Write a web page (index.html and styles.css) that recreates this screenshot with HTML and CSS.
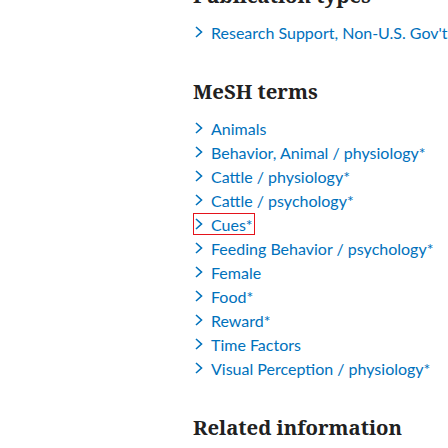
FILE: index.html
```html
<!DOCTYPE html>
<html lang="en">
<head>
<meta charset="utf-8">
<title>MeSH terms</title>
<link rel="stylesheet" href="styles.css">
</head>
<body>
<main class="page">
  <section class="block">
    <h2 class="block-title">Publication types</h2>
    <ul class="terms">
      <li class="term"><a class="term-link" href="#"><svg class="chev" viewBox="0 0 8 12" width="8" height="12"><path d="M1 1 L6.5 6 L1 11"/></svg><span>Research Support, Non-U.S. Gov't</span></a></li>
    </ul>
  </section>

  <section class="block">
    <h2 class="block-title">MeSH terms</h2>
    <ul class="terms">
      <li class="term"><a class="term-link" href="#"><svg class="chev" viewBox="0 0 8 12" width="8" height="12"><path d="M1 1 L6.5 6 L1 11"/></svg><span>Animals</span></a></li>
      <li class="term"><a class="term-link" href="#"><svg class="chev" viewBox="0 0 8 12" width="8" height="12"><path d="M1 1 L6.5 6 L1 11"/></svg><span>Behavior, Animal / physiology*</span></a></li>
      <li class="term"><a class="term-link" href="#"><svg class="chev" viewBox="0 0 8 12" width="8" height="12"><path d="M1 1 L6.5 6 L1 11"/></svg><span>Cattle / physiology*</span></a></li>
      <li class="term"><a class="term-link" href="#"><svg class="chev" viewBox="0 0 8 12" width="8" height="12"><path d="M1 1 L6.5 6 L1 11"/></svg><span>Cattle / psychology*</span></a></li>
      <li class="term"><a class="term-link is-focused" href="#"><svg class="chev" viewBox="0 0 8 12" width="8" height="12"><path d="M1 1 L6.5 6 L1 11"/></svg><span>Cues*</span></a></li>
      <li class="term"><a class="term-link" href="#"><svg class="chev" viewBox="0 0 8 12" width="8" height="12"><path d="M1 1 L6.5 6 L1 11"/></svg><span>Feeding Behavior / psychology*</span></a></li>
      <li class="term"><a class="term-link" href="#"><svg class="chev" viewBox="0 0 8 12" width="8" height="12"><path d="M1 1 L6.5 6 L1 11"/></svg><span>Female</span></a></li>
      <li class="term"><a class="term-link" href="#"><svg class="chev" viewBox="0 0 8 12" width="8" height="12"><path d="M1 1 L6.5 6 L1 11"/></svg><span>Food*</span></a></li>
      <li class="term"><a class="term-link" href="#"><svg class="chev" viewBox="0 0 8 12" width="8" height="12"><path d="M1 1 L6.5 6 L1 11"/></svg><span>Reward*</span></a></li>
      <li class="term"><a class="term-link" href="#"><svg class="chev" viewBox="0 0 8 12" width="8" height="12"><path d="M1 1 L6.5 6 L1 11"/></svg><span>Time Factors</span></a></li>
      <li class="term"><a class="term-link" href="#"><svg class="chev" viewBox="0 0 8 12" width="8" height="12"><path d="M1 1 L6.5 6 L1 11"/></svg><span>Visual Perception / physiology*</span></a></li>
    </ul>
  </section>

  <section class="block">
    <h2 class="block-title">Related information</h2>
  </section>
</main>
</body>
</html>
```
FILE: styles.css
```css
html, body {
  margin: 0;
  padding: 0;
  background: #ffffff;
}

body {
  font-family: "Lato", "Open Sans", sans-serif;
  font-size: 16px;
  color: #212121;
  overflow: hidden;
}

.page {
  margin: -19px 0 0 193px;
  display: flex;
  flex-direction: column;
  gap: 32px;
}

.block {
  display: flex;
  flex-direction: column;
  gap: 12px;
}

.block-title {
  margin: 0;
  font-family: "Noto Serif", "DejaVu Serif", serif;
  font-weight: 700;
  font-size: 20.3px;
  line-height: 28px;
  color: #212121;
  white-space: nowrap;
}

.terms {
  list-style: none;
  margin: 0;
  padding: 0;
}

.term {
  height: 24px;
  display: flex;
  align-items: flex-start;
}

.term-link {
  display: inline-flex;
  align-items: flex-start;
  height: 22px;
  padding: 0 2px 0 2px;
  line-height: 24px;
  color: #0071bc;
  text-decoration: none;
  white-space: nowrap;
}

.term-link.is-focused {
  outline: 1px solid #e4131b;
  outline-offset: -1px;
}

.chev {
  flex: none;
  width: 8px;
  height: 12px;
  margin: 5px 8px 0 0;
  fill: none;
  stroke: #0071bc;
  stroke-width: 1.6;
}
```
